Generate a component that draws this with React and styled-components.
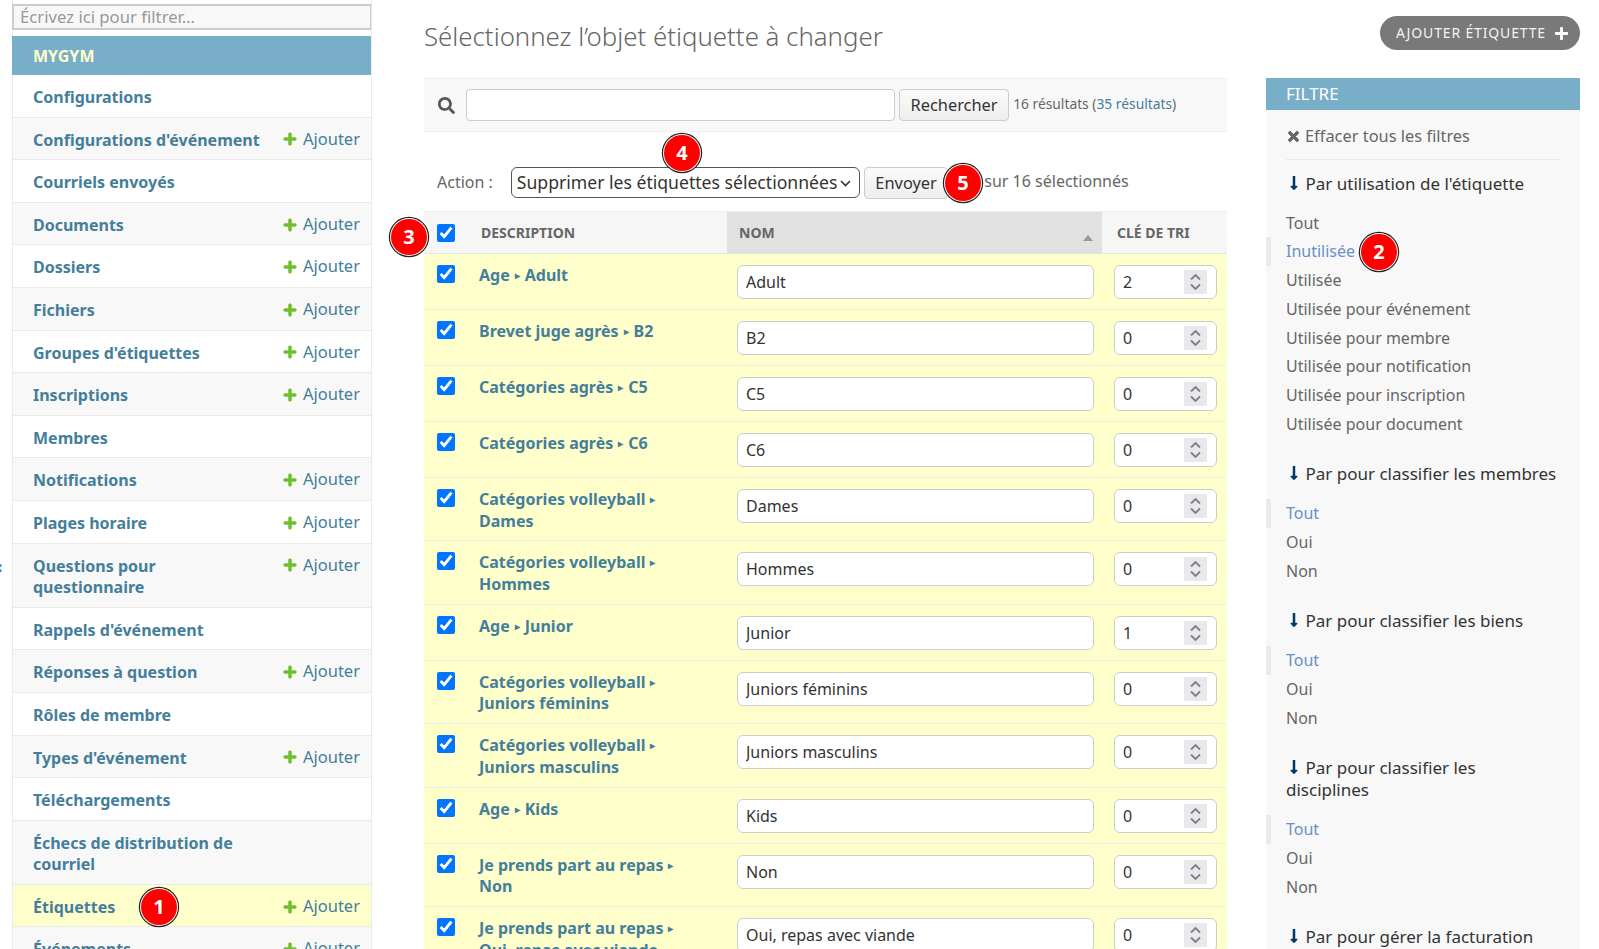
import React from 'react';
import styled, { createGlobalStyle } from 'styled-components';
import { FaPlus, FaSearch, FaTimes, FaLongArrowAltDown } from 'react-icons/fa';

const GlobalStyle = createGlobalStyle`
  html, body {
    margin: 0;
    height: 100%;
    overflow: hidden;
    background: #fff;
  }
  body {
    font-family: "Noto Sans", sans-serif;
    font-size: 16px;
    line-height: 21.6px;
    color: #333;
  }
  * { box-sizing: border-box; }
`;

const Page = styled.div`
  position: relative;
  display: flex;
  height: 949px;
  overflow: hidden;
`;

const Toggle = styled.span`
  position: absolute;
  left: -4px;
  top: 556px;
  color: #447e9b;
  font-size: 18px;
  font-weight: 700;
`;

const Sidebar = styled.nav`
  width: 360px;
  margin-left: 12px;
  flex: none;
  padding-top: 4px;
  border-left: 1px solid #eaeaea;
  border-right: 1px solid #eaeaea;
`;

const SideFilter = styled.input`
  display: block;
  width: calc(100% + 1px);
  margin-left: -1px;
  height: 26px;
  margin-bottom: 6px;
  padding: 0 6px 2px;
  border: 2px solid #ccc;
  border-right-width: 1px;
  background: #f8f8f8;
  font: inherit;
  font-size: 16.7px;
  &::placeholder { color: #999; }
`;

const AppName = styled.div`
  height: 39px;
  margin-left: -1px;
  padding-left: 21px;
  background: #79aec8;
  color: #ffc;
  font-weight: 700;
  line-height: 40px;
`;

const SideRow = styled.div`
  display: grid;
  grid-template-columns: 232px 1fr;
  padding: 12px 11px 8px 20px;
  border-bottom: 1px solid #eaeaea;
  background: ${p => (p.$current ? '#ffc' : p.$odd ? '#f8f8f8' : '#fff')};
`;

const SideLink = styled.a`
  color: #447e9b;
  font-weight: 700;
`;

const AddLink = styled.a`
  display: flex;
  align-items: center;
  justify-content: flex-end;
  gap: 6px;
  height: 21.6px;
  margin-top: -2px;
  color: #447e9b;
  font-size: 16.5px;
  svg {
    color: #70bf2b;
    font-size: 14px;
    margin-top: 2px;
    stroke: currentColor;
    stroke-width: 30;
  }
`;

const Main = styled.main`
  width: 1156px;
  margin-left: 52px;
  flex: none;
`;

const Top = styled.header`
  display: flex;
  justify-content: space-between;
  height: 78px;
  padding-top: 16px;
`;

const Title = styled.h1`
  margin: 4px 0 0;
  color: #666;
  font-size: 25.8px;
  font-weight: 300;
  line-height: 32px;
`;

const AddButton = styled.a`
  display: flex;
  align-items: center;
  gap: 8px;
  height: 34px;
  padding: 0 11px 0 16px;
  border-radius: 17px;
  background: #797979;
  color: #f4f4f4;
  font-size: 14px;
  letter-spacing: 0.85px;
  svg { font-size: 15px; color: #fff; }
`;

const Content = styled.div`
  display: flex;
  gap: 39px;
`;

const ChangeList = styled.section`
  width: 803px;
  flex: none;
`;

const Toolbar = styled.div`
  display: flex;
  align-items: center;
  height: 54px;
  padding-left: 14px;
  background: #f8f8f8;
  border-top: 1px solid #eee;
  border-bottom: 1px solid #eee;
  font-size: 13.8px;
  color: #666;
  svg { font-size: 17px; color: #555; }
  a { color: #447e9b; }
`;

const SearchInput = styled.input`
  width: 429px;
  height: 32px;
  margin: 0 4px 0 11px;
  border: 1px solid #ccc;
  border-radius: 4px;
  background: #fff;
`;

const Button = styled.button`
  height: 32px;
  padding: 0 10.5px;
  border: 1px solid #ccc;
  border-radius: 4px;
  background: linear-gradient(#fafafa, #eee);
  color: #333;
  font: inherit;
  font-size: 16.4px;
`;

const Count = styled.span`
  margin-left: 4px;
  margin-top: -2px;
`;

const Actions = styled.div`
  display: flex;
  align-items: center;
  height: 79px;
  padding: 22px 0 0 13px;
  color: #666;
`;

const ActionLabel = styled.label`
  margin-right: 18px;
`;

const SelectWrap = styled.div`
  position: relative;
  svg {
    position: absolute;
    right: 9px;
    top: 13px;
    pointer-events: none;
  }
`;

const ActionSelect = styled.select`
  display: block;
  width: 349px;
  height: 31px;
  padding: 0 5px;
  border: 1px solid #555;
  border-radius: 6px;
  background: #fff;
  color: #333;
  font: inherit;
  font-size: 17.6px;
  appearance: none;
`;

const SendButton = styled(Button)`
  width: 84px;
  margin-left: 4px;
`;

const Selected = styled.span`
  margin-left: 14px;
  margin-top: -2px;
`;

const HeadRow = styled.div`
  display: grid;
  grid-template-columns: 55px 248px 375px 125px;
  height: 43px;
  border-top: 1px solid #eee;
  border-bottom: 1px solid #e4e4e4;
  background: #f6f6f6;
`;

const HeadCell = styled.div`
  position: relative;
  display: flex;
  align-items: center;
  padding-left: ${p => p.$pad || 0}px;
  background: ${p => (p.$sorted ? '#e1e1e1' : 'transparent')};
  color: #666;
  font-size: 14px;
  font-weight: 700;
  text-transform: uppercase;
`;

const SortArrow = styled.span`
  position: absolute;
  right: 9px;
  top: 23px;
  border: 5.5px solid transparent;
  border-top: 0;
  border-bottom: 6px solid #999;
`;

const Check = styled.input`
  width: 18px;
  height: 18px;
  margin: 0;
`;

const CheckCell = styled.div`
  display: flex;
  align-items: ${p => (p.$head ? 'center' : 'flex-start')};
  padding-left: 13px;
`;

const Row = styled.div`
  display: grid;
  grid-template-columns: 55px 248px 375px 125px;
  padding: 11px 0 8.3px;
  border-bottom: 1px solid #eee;
  background: #ffc;
`;

const RowLink = styled.a`
  color: #447e9b;
  font-weight: 700;
`;

const Caret = styled.span`
  margin: 0 5px;
  font-size: 10px;
  vertical-align: 2px;
`;

const Child = styled.span`
  display: ${p => (p.$block ? 'block' : 'inline')};
`;

const NameInput = styled.input`
  width: 357px;
  height: 34px;
  margin: 0 0 1.7px 10px;
  padding: 0 8px;
  border: 1px solid #ccc;
  border-radius: 6px;
  background: #fff;
  color: #333;
  font: inherit;
`;

const NumberBox = styled.div`
  position: relative;
  width: 103px;
  height: 34px;
  margin-left: 12px;
  padding-left: 8px;
  border: 1px solid #ccc;
  border-radius: 6px;
  background: #fff;
  color: #333;
  line-height: 32px;
`;

const Spinner = styled.span`
  position: absolute;
  top: 4px;
  right: 9px;
  width: 23px;
  height: 24px;
  background: #e9e9ed;
  svg { display: block; }
`;

const Filter = styled.aside`
  width: 314px;
  height: 900px;
  flex: none;
  background: #f8f8f8;
`;

const FilterTitle = styled.h2`
  height: 32px;
  margin: 0;
  padding-left: 20px;
  background: #79aec8;
  color: #fff;
  font-size: 17px;
  font-weight: 400;
  line-height: 32px;
`;

const ClearLink = styled.div`
  display: flex;
  align-items: center;
  gap: 4px;
  margin: 0 20px;
  height: 50px;
  padding-top: 3px;
  border-bottom: 1px solid #eaeaea;
  color: #666;
  font-size: 16.4px;
  svg {
    font-size: 15px;
    stroke: currentColor;
    stroke-width: 30;
  }
`;

const FilterGroup = styled.div`
  padding-top: ${p => (p.$first ? 12.5 : 24.6)}px;
`;

const GroupTitle = styled.h3`
  margin: 0 0 14px;
  padding: 0 20px;
  color: #333;
  font-size: 17px;
  font-weight: 400;
  line-height: 22px;
  svg { font-size: 16px; color: #003a63; vertical-align: -1px; margin-right: 3.5px; }
`;

const Option = styled.div`
  height: 28.8px;
  padding-left: ${p => (p.$selected ? 15 : 20)}px;
  border-left: ${p => (p.$selected ? '5px solid #eaeaea' : '0')};
  color: ${p => (p.$selected ? '#6b8fc4' : '#666')};
  line-height: 28.8px;
`;

const Badge = styled.span`
  position: absolute;
  left: ${p => p.$x - 18}px;
  top: ${p => p.$y - 18}px;
  width: 36px;
  height: 36px;
  display: flex;
  align-items: center;
  justify-content: center;
  border-radius: 50%;
  background: #f00;
  box-shadow: 0 0 0 1px #fff, 0 0 0 2.2px #222;
  color: #fff;
  font-size: 20px;
  font-weight: 700;
`;

const models = [
  { name: 'Configurations' },
  { name: "Configurations d'événement", add: true },
  { name: 'Courriels envoyés' },
  { name: 'Documents', add: true },
  { name: 'Dossiers', add: true },
  { name: 'Fichiers', add: true },
  { name: "Groupes d'étiquettes", add: true },
  { name: 'Inscriptions', add: true },
  { name: 'Membres' },
  { name: 'Notifications', add: true },
  { name: 'Plages horaire', add: true },
  { name: 'Questions pour questionnaire', add: true },
  { name: "Rappels d'événement" },
  { name: 'Réponses à question', add: true },
  { name: 'Rôles de membre' },
  { name: "Types d'événement", add: true },
  { name: 'Téléchargements' },
  { name: 'Échecs de distribution de courriel' },
  { name: 'Étiquettes', add: true, current: true },
  { name: 'Événements', add: true },
];

const rows = [
  { group: 'Age', name: 'Adult', key: 2 },
  { group: 'Brevet juge agrès', name: 'B2', key: 0 },
  { group: 'Catégories agrès', name: 'C5', key: 0 },
  { group: 'Catégories agrès', name: 'C6', key: 0 },
  { group: 'Catégories volleyball', name: 'Dames', key: 0, wrap: true },
  { group: 'Catégories volleyball', name: 'Hommes', key: 0, wrap: true },
  { group: 'Age', name: 'Junior', key: 1 },
  { group: 'Catégories volleyball', name: 'Juniors féminins', key: 0, wrap: true },
  { group: 'Catégories volleyball', name: 'Juniors masculins', key: 0, wrap: true },
  { group: 'Age', name: 'Kids', key: 0 },
  { group: 'Je prends part au repas', name: 'Non', key: 0, wrap: true },
  { group: 'Je prends part au repas', name: 'Oui, repas avec viande', key: 0, wrap: true },
];

const filters = [
  {
    title: "Par utilisation de l'étiquette",
    selected: 1,
    options: ['Tout', 'Inutilisée', 'Utilisée', 'Utilisée pour événement', 'Utilisée pour membre', 'Utilisée pour notification', 'Utilisée pour inscription', 'Utilisée pour document'],
  },
  { title: 'Par pour classifier les membres', selected: 0, options: ['Tout', 'Oui', 'Non'] },
  { title: 'Par pour classifier les biens', selected: 0, options: ['Tout', 'Oui', 'Non'] },
  { title: 'Par pour classifier les disciplines', selected: 0, options: ['Tout', 'Oui', 'Non'] },
  { title: 'Par pour gérer la facturation', selected: 0, options: ['Tout', 'Oui', 'Non'] },
];

const badges = [
  { n: 1, x: 159, y: 907 },
  { n: 2, x: 1379, y: 252 },
  { n: 3, x: 409, y: 237 },
  { n: 4, x: 682, y: 153 },
  { n: 5, x: 963, y: 183 },
];

const Chevrons = () => (
  <svg width="23" height="24" viewBox="0 0 23 24" fill="none" stroke="#808080" strokeWidth="1.8">
    <path d="M7 9.5 11.5 5 16 9.5M7 14.5 11.5 19 16 14.5" />
  </svg>
);

const SelectChevron = () => (
  <svg width="11" height="7" viewBox="0 0 11 7" fill="none" stroke="#333" strokeWidth="1.6">
    <path d="M1 1 5.5 5.5 10 1" />
  </svg>
);

const App = () => {
  return (
    <Page>
      <GlobalStyle />
      <Toggle>‹</Toggle>
      <Sidebar>
        <SideFilter placeholder="Écrivez ici pour filtrer…" />
        <AppName>MYGYM</AppName>
        {models.map((m, i) => (
          <SideRow key={m.name} $odd={i % 2 === 1} $current={m.current}>
            <SideLink>{m.name}</SideLink>
            {m.add && (
              <AddLink>
                <FaPlus />
                Ajouter
              </AddLink>
            )}
          </SideRow>
        ))}
      </Sidebar>
      <Main>
        <Top>
          <Title>Sélectionnez l’objet étiquette à changer</Title>
          <AddButton>
            AJOUTER ÉTIQUETTE
            <FaPlus />
          </AddButton>
        </Top>
        <Content>
          <ChangeList>
            <Toolbar>
              <FaSearch />
              <SearchInput />
              <Button>Rechercher</Button>
              <Count>
                16 résultats (<a>35 résultats</a>)
              </Count>
            </Toolbar>
            <Actions>
              <ActionLabel>Action :</ActionLabel>
              <SelectWrap>
                <ActionSelect>
                  <option>Supprimer les étiquettes sélectionnées</option>
                </ActionSelect>
                <SelectChevron />
              </SelectWrap>
              <SendButton>Envoyer</SendButton>
              <Selected>16 sur 16 sélectionnés</Selected>
            </Actions>
            <HeadRow>
              <CheckCell $head>
                <Check type="checkbox" defaultChecked />
              </CheckCell>
              <HeadCell $pad={2}>Description</HeadCell>
              <HeadCell $pad={12} $sorted>
                Nom
                <SortArrow />
              </HeadCell>
              <HeadCell $pad={15}>Clé de tri</HeadCell>
            </HeadRow>
            {rows.map(r => (
              <Row key={r.name}>
                <CheckCell>
                  <Check type="checkbox" defaultChecked />
                </CheckCell>
                <RowLink>
                  {r.group}
                  <Caret>▸</Caret>
                  <Child $block={r.wrap}>{r.name}</Child>
                </RowLink>
                <NameInput defaultValue={r.name} />
                <NumberBox>
                  {r.key}
                  <Spinner>
                    <Chevrons />
                  </Spinner>
                </NumberBox>
              </Row>
            ))}
          </ChangeList>
          <Filter>
            <FilterTitle>FILTRE</FilterTitle>
            <ClearLink>
              <FaTimes />
              Effacer tous les filtres
            </ClearLink>
            {filters.map((f, i) => (
              <FilterGroup key={f.title} $first={i === 0}>
                <GroupTitle>
                  <FaLongArrowAltDown />
                  {f.title}
                </GroupTitle>
                {f.options.map((o, j) => (
                  <Option key={o} $selected={j === f.selected}>
                    {o}
                  </Option>
                ))}
              </FilterGroup>
            ))}
          </Filter>
        </Content>
      </Main>
      {badges.map(b => (
        <Badge key={b.n} $x={b.x} $y={b.y}>
          {b.n}
        </Badge>
      ))}
    </Page>
  );
};

export default App;
